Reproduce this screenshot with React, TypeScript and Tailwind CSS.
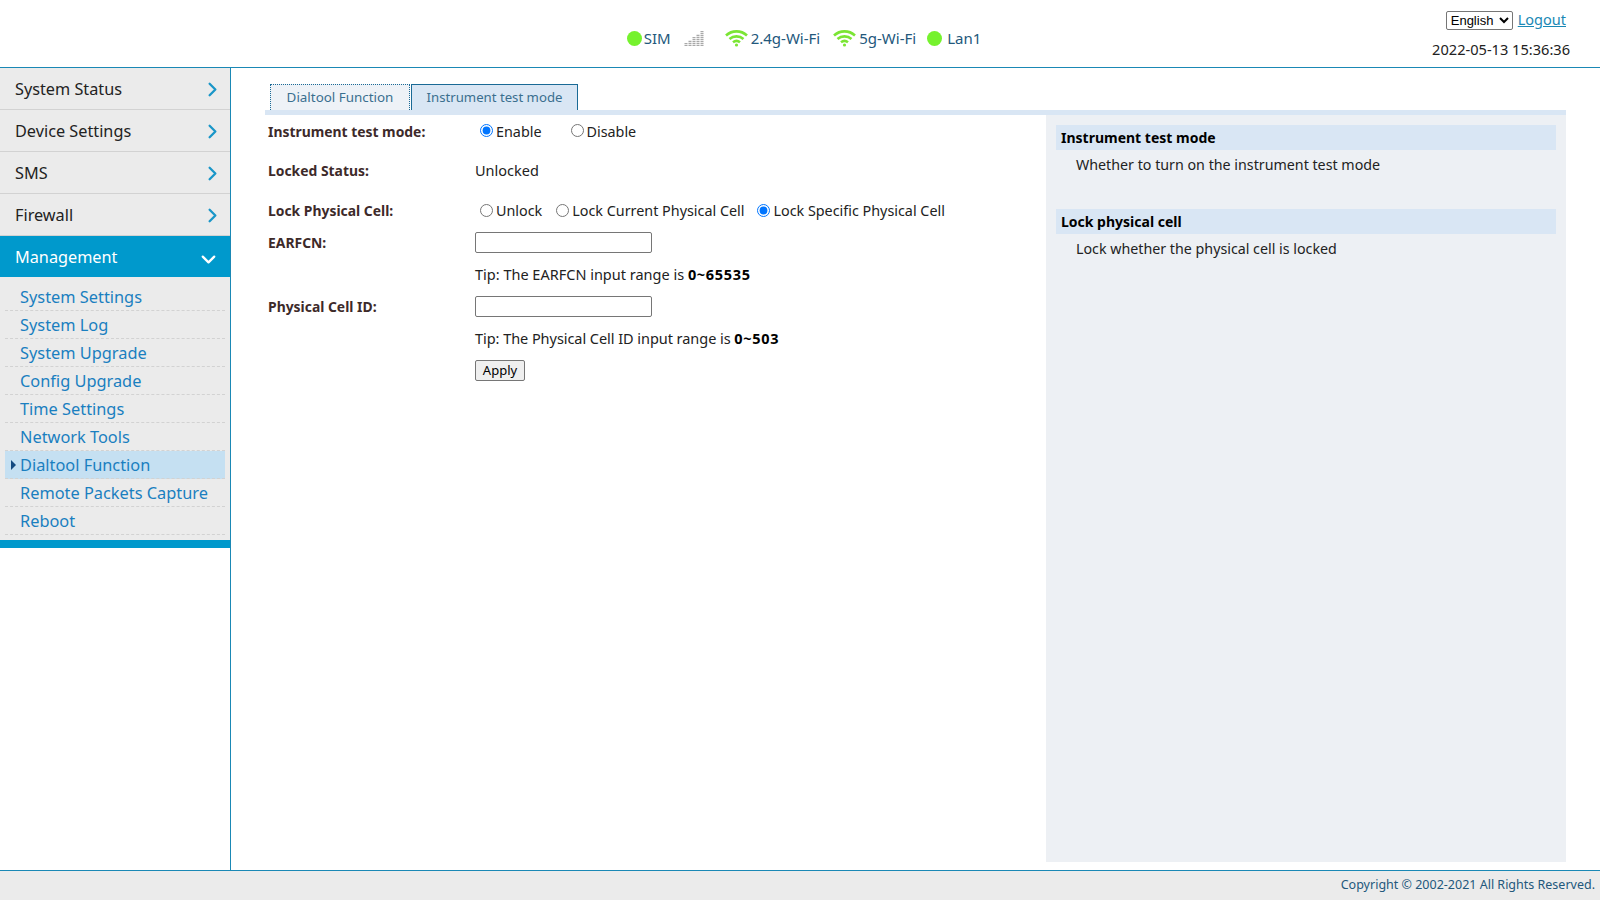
import { ChevronDown, ChevronRight } from 'lucide-react';

const font = { fontFamily: '"Noto Sans", sans-serif' };

const topMenu = ['System Status', 'Device Settings', 'SMS', 'Firewall'];
const subMenu = [
  'System Settings',
  'System Log',
  'System Upgrade',
  'Config Upgrade',
  'Time Settings',
  'Network Tools',
  'Dialtool Function',
  'Remote Packets Capture',
  'Reboot',
];

function Wifi() {
  return (
    <svg width="23" height="18" viewBox="0 0 23 18" fill="none" stroke="#7be534" strokeWidth="2.6">
      <path d="M1 6.5 C7 1 16 1 22 6.5" />
      <path d="M4.5 10 C8.5 6.5 14.5 6.5 18.5 10" />
      <path d="M8 13.2 C10 11.6 13 11.6 15 13.2" />
      <circle cx="11.5" cy="16" r="1.6" fill="#7be534" stroke="none" />
    </svg>
  );
}

function Signal() {
  const bars = [3, 6, 9, 12, 15];
  return (
    <svg width="21" height="16" viewBox="0 0 21 16" className="block">
      {bars.map((h, i) => (
        <line key={i} x1={i * 4 + 2} x2={i * 4 + 2} y1={16} y2={16 - h} stroke="#a8a8a8" strokeWidth="3" strokeDasharray="1.2 0.8" />
      ))}
    </svg>
  );
}

function Dot() {
  return <span className="block w-[15px] h-[15px] rounded-full bg-[#76f22e]" />;
}

function Radio({ label, checked, className }: { label: string; checked?: boolean; className?: string }) {
  return (
    <label className={`flex items-center text-[14.35px] ${className ?? ''}`}>
      <input type="radio" readOnly checked={!!checked} className="w-[13px] h-[13px] m-0 mr-[3px] accent-[#0075ff]" />
      <span className="mt-[2px]">{label}</span>
    </label>
  );
}

function Header() {
  return (
    <div className="h-[68px] shrink-0 border-b border-[#1a88b5] relative flex justify-center items-start pt-[28px] pl-[8px] text-[15px] text-[#23587c]">
      <div className="flex items-center h-[20px]">
        <Dot />
        <span className="ml-[2px]">SIM</span>
        <span className="ml-[13px] mr-[20px]"><Signal /></span>
        <Wifi />
        <span className="ml-[3px]">2.4g-Wi-Fi</span>
        <span className="ml-[13px]"><Wifi /></span>
        <span className="ml-[3px]">5g-Wi-Fi</span>
        <span className="ml-[11px]"><Dot /></span>
        <span className="ml-[5px]">Lan1</span>
      </div>
      <div className="absolute right-[30px] top-[11px] flex flex-col items-end">
        <div className="flex items-center h-[19px] mr-[4px]">
          <select className="h-[19px] w-[67px] border border-[#767676] rounded-[2px] text-[13px] text-black bg-white pl-0" style={{ fontFamily: '"Liberation Sans", sans-serif' }}>
            <option>English</option>
          </select>
          <a className="ml-[5px] mb-[1px] text-[14.5px] text-[#1a88b5] underline">Logout</a>
        </div>
        <div className="mt-[9px] text-[14.6px] text-[#222]">2022-05-13 15:36:36</div>
      </div>
    </div>
  );
}

function Sidebar() {
  return (
    <div className="w-[231px] shrink-0 border-r border-[#1a88b5]">
      <div className="bg-[#ebebeb]">
        {topMenu.map((m) => (
          <div key={m} className="h-[42px] border-b border-[#d2d2d2] pl-[15px] pr-[6px] flex items-center justify-between text-[16.25px] text-[#222]">
            <span className="mt-[1px]">{m}</span>
            <ChevronRight size={23} strokeWidth={2.4} className="text-[#1a96c8] mt-[2px]" />
          </div>
        ))}
        <div className="h-[41px] bg-[#0099cc] pl-[15px] pr-[10px] flex items-center justify-between text-[16.25px] text-white">
          <span className="mt-[1px]">Management</span>
          <ChevronDown size={23} strokeWidth={2.4} className="mt-[6px]" />
        </div>
        <div className="px-[5px] pt-[6px] pb-[5px]">
          {subMenu.map((s) => {
            const active = s === 'Dialtool Function';
            return (
              <div
                key={s}
                className={`h-[28px] pl-[15px] pt-[1px] border-b border-dashed border-[#d2d2d2] flex items-center text-[16.35px] text-[#1a7fc0] relative ${active ? 'bg-[#c5e0f2]' : ''}`}
              >
                {active && <span className="absolute left-[6px] top-[9px] w-0 h-0 border-y-[5px] border-y-transparent border-l-[5px] border-l-[#154a80]" />}
                {s}
              </div>
            );
          })}
        </div>
        <div className="h-[8px] bg-[#0099cc]" />
      </div>
    </div>
  );
}

function Row({ label, className, children }: { label: string; className?: string; children: React.ReactNode }) {
  return (
    <div className={`flex items-center ${className ?? ''}`}>
      <div className="w-[207px] pt-[2px] text-[13.9px] font-bold text-[#3d2a2a]">{label}</div>
      {children}
    </div>
  );
}

function Content() {
  return (
    <div className="flex-1 flex flex-col pl-[34px] pr-[34px] pt-[16px] pb-[8px] min-w-0">
      <div className="flex items-end h-[26px] pl-[5px]">
        <div className="h-[26px] w-[140px] border border-b-0 border-dotted border-[#1a6a96] bg-[#eef2f7] flex items-center justify-center text-[13.4px] text-[#3a6f8f]">Dialtool Function</div>
        <div className="ml-[1px] h-[26px] w-[167px] border border-b-0 border-[#1a6a96] bg-[#d9e6f4] flex items-center justify-center text-[13.2px] text-[#3a6f8f]">Instrument test mode</div>
      </div>
      <div className="h-[5px] bg-[#d9e6f4]" />
      <div className="flex-1 flex">
        <div className="flex-1 pl-[3px] text-[14.5px] text-[#222]">
          <Row label="Instrument test mode:" className="h-[32px]">
            <Radio label="Enable" checked className="ml-[5px]" />
            <Radio label="Disable" className="ml-[29px]" />
          </Row>
          <Row label="Locked Status:" className="h-[27px] mt-[10px]">
            <span>Unlocked</span>
          </Row>
          <Row label="Lock Physical Cell:" className="h-[20px] mt-[16px]">
            <Radio label="Unlock" className="ml-[5px]" />
            <Radio label="Lock Current Physical Cell" className="ml-[14px]" />
            <Radio label="Lock Specific Physical Cell" checked className="ml-[13px]" />
          </Row>
          <Row label="EARFCN:" className="h-[22px] mt-[11px]">
            <input className="w-[177px] h-[21px] border border-[#767676] rounded-[2px] bg-white" />
          </Row>
          <div className="ml-[207px] h-[20px] mt-[11px] pt-[2px] flex items-center">
            <span>Tip: The EARFCN input range is <b className="tracking-[0.7px] text-black">0~65535</b></span>
          </div>
          <Row label="Physical Cell ID:" className="h-[22px] mt-[11px]">
            <input className="w-[177px] h-[21px] border border-[#767676] rounded-[2px] bg-white" />
          </Row>
          <div className="ml-[207px] h-[20px] mt-[11px] pt-[2px] flex items-center">
            <span className="tracking-[-0.05px]">Tip: The Physical Cell ID input range is <b className="tracking-[0.7px] text-black">0~503</b></span>
          </div>
          <button className="block ml-[207px] mt-[12px] w-[50px] h-[21px] border border-[#767676] rounded-[2px] bg-[#efefef] text-[13px] text-black">Apply</button>
        </div>
        <div className="w-[520px] shrink-0 bg-[#edf0f4] pt-[10px] px-[10px] text-[14.25px] text-[#222]">
          <div className="h-[25px] bg-[#d9e6f4] pl-[5px] flex items-center text-[14px] font-bold text-black">Instrument test mode</div>
          <div className="pl-[20px] h-[59px] pt-[4px] leading-[22px]">Whether to turn on the instrument test mode</div>
          <div className="h-[25px] bg-[#d9e6f4] pl-[5px] flex items-center text-[14px] font-bold text-black">Lock physical cell</div>
          <div className="pl-[20px] pt-[4px] leading-[22px]">Lock whether the physical cell is locked</div>
        </div>
      </div>
    </div>
  );
}

export default function App() {
  return (
    <div className="h-[900px] flex flex-col bg-white overflow-hidden" style={font}>
      <Header />
      <div className="flex-1 flex min-h-0">
        <Sidebar />
        <Content />
      </div>
      <div className="h-[30px] shrink-0 border-t border-[#1a88b5] bg-[#ebebeb] flex items-center justify-end pr-[5px] pb-[1px] text-[12.5px] text-[#23587c]">
        Copyright © 2002-2021 All Rights Reserved.
      </div>
    </div>
  );
}
